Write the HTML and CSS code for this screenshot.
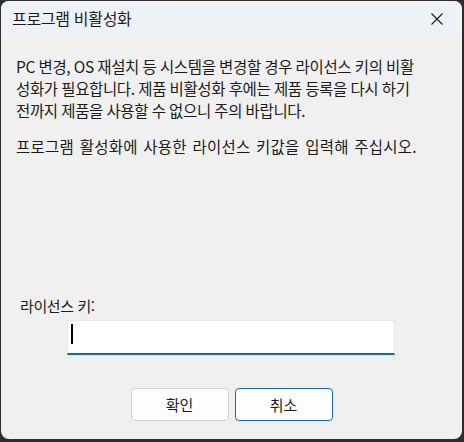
FILE: index.html
```html
<!DOCTYPE html>
<html lang="ko">
<head>
    <meta charset="UTF-8">
    <meta name="viewport" content="width=device-width, initial-scale=1.0">
    <title>프로그램 비활성화</title>
    <link rel="stylesheet" href="styles.css">
</head>
<body>
    <div class="window">
        <div class="titlebar">
            <span class="title">프로그램 비활성화</span>
            <button class="close-btn" aria-label="닫기">
                <svg width="12" height="12" viewBox="0 0 12 12">
                    <path d="M0.5 0.5 L11.5 11.5 M11.5 0.5 L0.5 11.5" stroke="#1a1a1a" stroke-width="1.1" fill="none"/>
                </svg>
            </button>
        </div>
        <div class="content">
            <p class="message">
                PC 변경, OS 재설치 등 시스템을 변경할 경우 라이선스 키의 비활<br>
                성화가 필요합니다. 제품 비활성화 후에는 제품 등록을 다시 하기<br>
                전까지 제품을 사용할 수 없으니 주의 바랍니다.
            </p>
            <p class="message message-wide">프로그램 활성화에 사용한 라이선스 키값을 입력해 주십시오.</p>

            <div class="key-label">라이선스 키:</div>
            <div class="key-input"><span class="caret"></span></div>

            <div class="buttons">
                <button class="btn">확인</button>
                <button class="btn btn-default">취소</button>
            </div>
        </div>
    </div>
</body>
</html>
```

FILE: styles.css
```css
html, body {
    margin: 0;
    padding: 0;
}

body {
    background-color: #2e2e2e;
    font-family: "Noto Sans CJK KR", "Noto Sans", sans-serif;
    font-size: 15px;
    color: #1b1b1b;
    width: 464px;
    height: 442px;
    padding: 1px 2px 3px 1px;
    box-sizing: border-box;
}

.window {
    width: 100%;
    height: 100%;
    background-color: #f0f0f0;
    border-radius: 8px;
    overflow: hidden;
    display: flex;
    flex-direction: column;
}

.titlebar {
    height: 36px;
    background-color: #eef2f6;
    display: flex;
    align-items: center;
    justify-content: space-between;
    padding-left: 11px;
    flex-shrink: 0;
}

.title {
    font-size: 16px;
    letter-spacing: -0.3px;
    margin-top: -2px;
}

.close-btn {
    width: 46px;
    height: 36px;
    border: none;
    background: transparent;
    display: flex;
    align-items: center;
    justify-content: center;
    padding: 0;
    margin-right: 2px;
}

.content {
    display: flex;
    flex-direction: column;
    padding: 18px 15px 0 15px;
}

.message {
    margin: 0;
    font-size: 15.5px;
    line-height: 22px;
    letter-spacing: -0.35px;
    word-spacing: -0.5px;
    white-space: nowrap;
}

.message + .message {
    margin-top: 14px;
}

.message-wide {
    letter-spacing: 0.25px;
    word-spacing: 1px;
}

.key-label {
    margin-top: 138px;
    margin-left: 4px;
    line-height: 21px;
    letter-spacing: -0.4px;
}

.key-input {
    margin-top: 4px;
    margin-left: 51px;
    width: 328px;
    height: 35px;
    box-sizing: border-box;
    background-color: #ffffff;
    border: 1px solid #e6e6e6;
    border-bottom: 2px solid #1764b0;
    display: flex;
    align-items: flex-start;
    padding: 3px 0 0 3px;
}

.caret {
    width: 1.5px;
    height: 20px;
    background-color: #000000;
}

.buttons {
    display: flex;
    justify-content: center;
    gap: 6px;
    margin-top: 33px;
}

.btn {
    width: 98px;
    height: 33px;
    background-color: #fdfdfd;
    border: 1px solid #d3d3d3;
    border-radius: 4px;
    font-family: inherit;
    font-size: 15px;
    color: #1b1b1b;
    padding: 0;
}

.btn-default {
    border-color: #1a67b8;
}
```
